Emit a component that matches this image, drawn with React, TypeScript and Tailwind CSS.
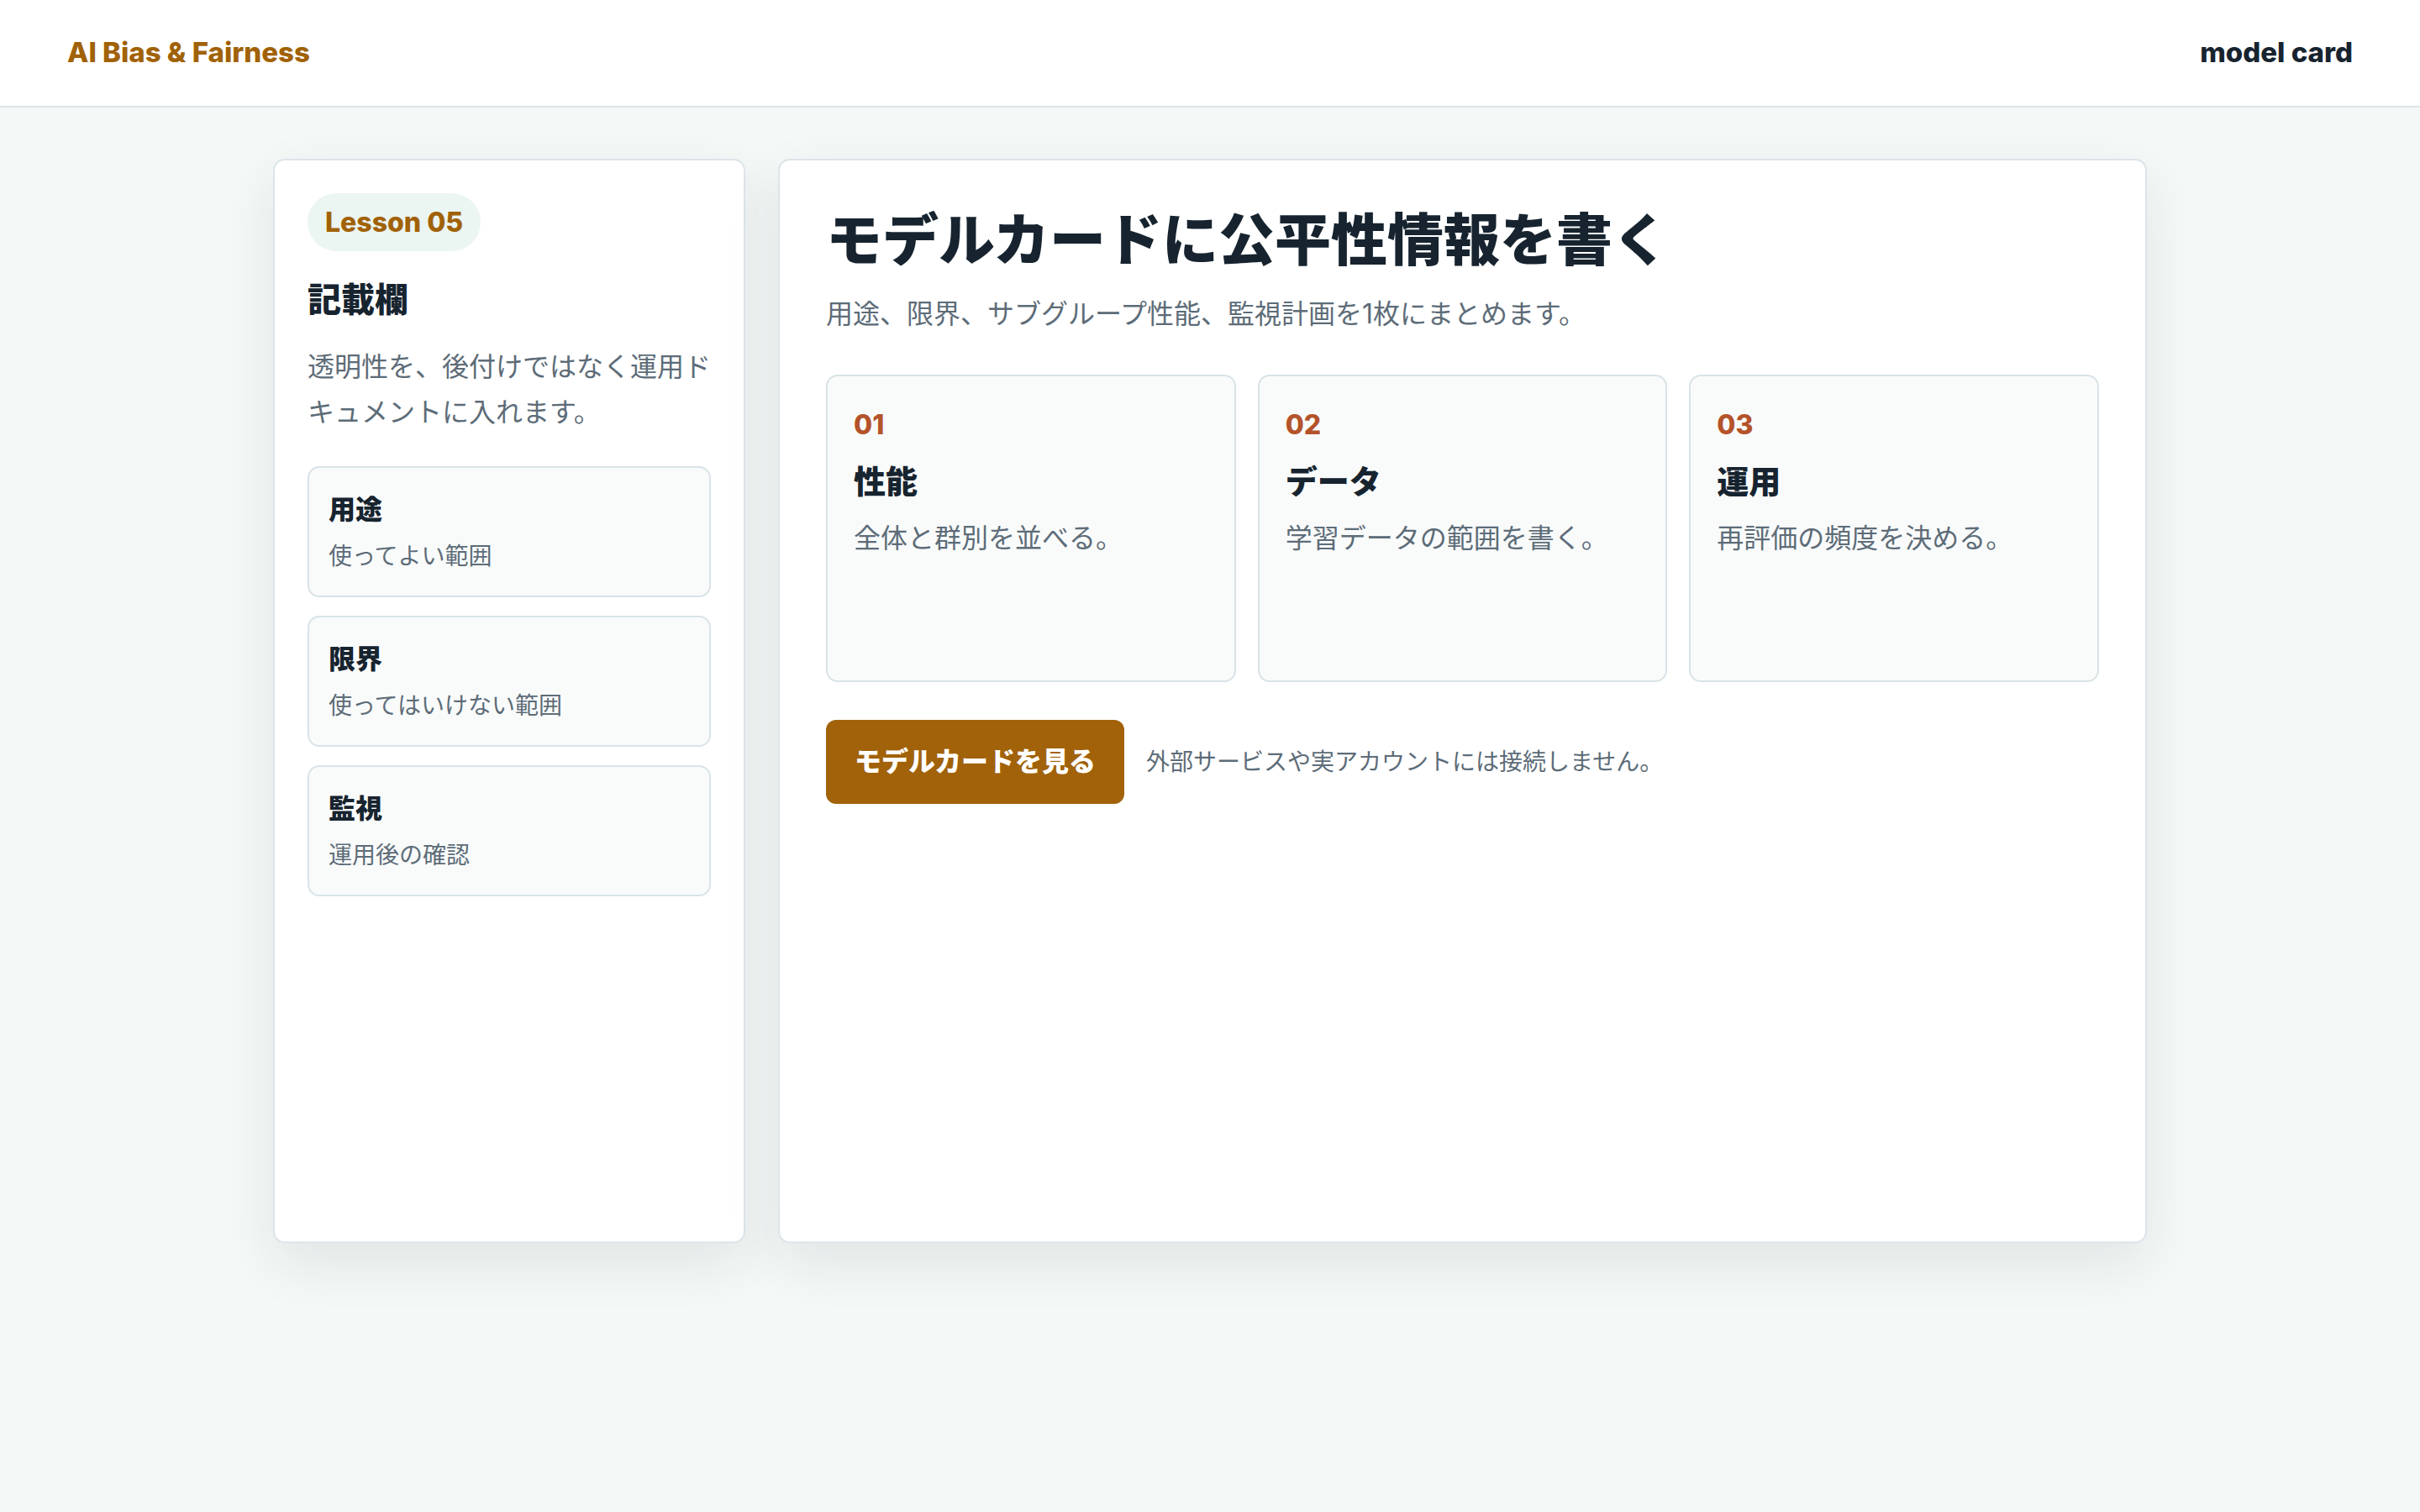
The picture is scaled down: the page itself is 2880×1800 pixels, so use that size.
// model card lesson page

const fields = [
  { title: '用途', note: '使ってよい範囲' },
  { title: '限界', note: '使ってはいけない範囲' },
  { title: '監視', note: '運用後の確認' },
];

const steps = [
  { no: '01', title: '性能', body: '全体と群別を並べる。' },
  { no: '02', title: 'データ', body: '学習データの範囲を書く。' },
  { no: '03', title: '運用', body: '再評価の頻度を決める。' },
];

const App = () => {
  return (
    <div className="min-h-screen bg-[#f4f8f7] font-[Inter,'Noto_Sans_CJK_JP',sans-serif] text-[#17242f]">
      {/* top bar */}
      <header className="h-[128px] bg-white border-b-2 border-[#d9e4e7] px-[80px] flex items-center justify-between">
        <div className="text-[33px] font-extrabold text-[#a16207]">AI Bias &amp; Fairness</div>
        <div className="text-[33px] font-extrabold text-[#17242f]">model card</div>
      </header>

      <main className="w-[2230px] mx-auto pt-[61px] grid grid-cols-[562px_1fr] gap-[39px]">
        {/* side panel */}
        <aside className="h-[1291px] bg-white border-2 border-[#dce5e9] rounded-[14px] px-[39px] pt-[39px] shadow-[0_24px_64px_rgba(30,60,60,0.09)]">
          <div className="inline-flex items-center h-[69px] px-[21px] rounded-full bg-[#ebf5f2] text-[32px] font-extrabold text-[#a16207]">
            Lesson 05
          </div>
          <h2 className="mt-[30px] text-[40px] leading-[56px] font-black">記載欄</h2>
          <p className="mt-[25px] text-[32px] leading-[54px] text-[#5d6c78]">
            透明性を、後付けではなく運用ドキュメントに入れます。
          </p>
          <div className="mt-[37px] flex flex-col gap-[22px]">
            {fields.map((f) => (
              <div
                key={f.title}
                className="h-[156px] bg-[#f9fbfb] border-2 border-[#d9e3e7] rounded-[14px] px-[23px] pt-[26px]"
              >
                <div className="text-[32px] leading-[48px] font-black">{f.title}</div>
                <div className="mt-[10px] text-[28px] leading-[42px] text-[#5d6c78]">{f.note}</div>
              </div>
            ))}
          </div>
        </aside>

        {/* main panel */}
        <section className="h-[1291px] bg-white border-2 border-[#dce5e9] rounded-[14px] p-[55px] shadow-[0_24px_64px_rgba(30,60,60,0.09)]">
          <h1 className="text-[67px] leading-[80px] font-black">モデルカードに公平性情報を書く</h1>
          <p className="mt-[24px] text-[32px] leading-[48px] text-[#5d6c78]">
            用途、限界、サブグループ性能、監視計画を1枚にまとめます。
          </p>

          <div className="mt-[48px] grid grid-cols-3 gap-[26px]">
            {steps.map((s) => (
              <div
                key={s.no}
                className="h-[366px] bg-[#f9fbfb] border-2 border-[#d9e3e7] rounded-[14px] px-[31px] pt-[34px]"
              >
                <div className="text-[32px] leading-[48px] font-extrabold text-[#b4532a]">{s.no}</div>
                <div className="mt-[17px] text-[38px] leading-[53px] font-black">{s.title}</div>
                <div className="mt-[15px] text-[32px] leading-[51px] text-[#5d6c78]">{s.body}</div>
              </div>
            ))}
          </div>

          <div className="mt-[45px] flex items-center gap-[26px]">
            <button className="h-[100px] px-[34px] rounded-[12px] bg-[#a1620a] text-white text-[32px] font-black">
              モデルカードを見る
            </button>
            <span className="text-[28px] text-[#5d6c78]">外部サービスや実アカウントには接続しません。</span>
          </div>
        </section>
      </main>
    </div>
  );
};

export default App;
